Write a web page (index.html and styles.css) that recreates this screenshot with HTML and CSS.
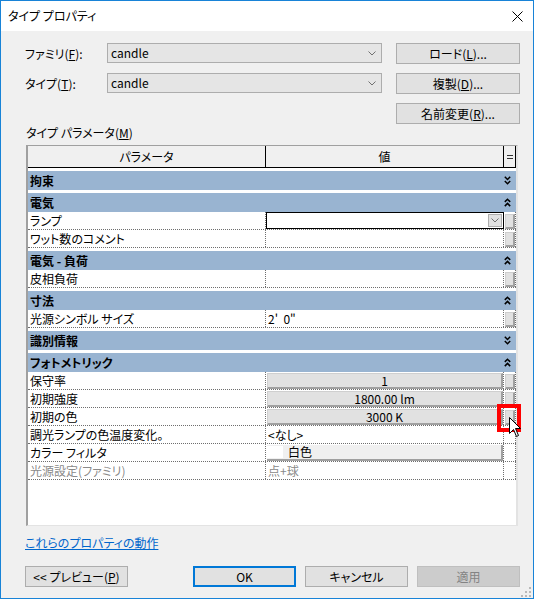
FILE: index.html
```html
<!DOCTYPE html>
<html lang="ja">
<head>
<meta charset="utf-8">
<title>タイプ プロパティ</title>
<link rel="stylesheet" href="styles.css">
</head>
<body>
<div class="window">
  <div class="titlebar">
    <span class="title">タイプ プロパティ</span>
    <svg class="close" width="11" height="11" viewBox="0 0 11 11"><path d="M0.5 0.5L10.5 10.5M10.5 0.5L0.5 10.5" stroke="#000" stroke-width="1" fill="none"/></svg>
  </div>
  <div class="main">
    <div class="form">
      <div class="lbl">ファミリ(<u>F</u>):</div>
      <div class="combo"><span>candle</span><svg width="8" height="5" viewBox="0 0 8 5"><polyline points="0.5,0.5 4,4 7.5,0.5" fill="none" stroke="#707070" stroke-width="1"/></svg></div>
      <div class="btn">ロード(<u>L</u>)...</div>
      <div class="lbl">タイプ(<u>T</u>):</div>
      <div class="combo"><span>candle</span><svg width="8" height="5" viewBox="0 0 8 5"><polyline points="0.5,0.5 4,4 7.5,0.5" fill="none" stroke="#707070" stroke-width="1"/></svg></div>
      <div class="btn">複製(<u>D</u>)...</div>
      <div></div>
      <div></div>
      <div class="btn">名前変更(<u>R</u>)...</div>
    </div>
    <div class="plabel">タイプ パラメータ(<u>M</u>)</div>
    <div class="grid">
      <div class="hdr">
        <div class="c1">パラメータ</div>
        <div class="c2">値</div>
        <div class="c3"><svg width="7" height="6" viewBox="0 0 7 6"><path d="M0 1.5H6M0 4.5H6" stroke="#333" stroke-width="1"/></svg></div>
      </div>
      <div class="grp"><span>拘束</span><svg class="chev" width="7" height="9" viewBox="0 0 7 9"><polyline points="0.8,0.8 3.5,3.5 6.2,0.8" /><polyline points="0.8,5 3.5,7.7 6.2,5" /></svg></div>
      <div class="grp"><span>電気</span><svg class="chev" width="7" height="9" viewBox="0 0 7 9"><polyline points="0.8,3.9 3.5,1.2 6.2,3.9" /><polyline points="0.8,8.1 3.5,5.4 6.2,8.1" /></svg></div>
      <div class="row">
        <div class="n">ランプ</div>
        <div class="v lampcell"><div class="lampbox"><div class="dd"><svg width="8" height="5" viewBox="0 0 8 5"><polyline points="0.5,0.5 4,4 7.5,0.5" fill="none" stroke="#707070" stroke-width="1"/></svg></div></div></div>
        <div class="e"><div class="eb"></div></div>
      </div>
      <div class="row">
        <div class="n">ワット数のコメント</div>
        <div class="v"></div>
        <div class="e"><div class="eb"></div></div>
      </div>
      <div class="grp"><span>電気 - 負荷</span><svg class="chev" width="7" height="9" viewBox="0 0 7 9"><polyline points="0.8,3.9 3.5,1.2 6.2,3.9" /><polyline points="0.8,8.1 3.5,5.4 6.2,8.1" /></svg></div>
      <div class="row">
        <div class="n">皮相負荷</div>
        <div class="v"></div>
        <div class="e"><div class="eb"></div></div>
      </div>
      <div class="grp"><span>寸法</span><svg class="chev" width="7" height="9" viewBox="0 0 7 9"><polyline points="0.8,3.9 3.5,1.2 6.2,3.9" /><polyline points="0.8,8.1 3.5,5.4 6.2,8.1" /></svg></div>
      <div class="row">
        <div class="n">光源シンボル サイズ</div>
        <div class="v">2'&nbsp; 0"</div>
        <div class="e"><div class="eb"></div></div>
      </div>
      <div class="grp"><span>識別情報</span><svg class="chev" width="7" height="9" viewBox="0 0 7 9"><polyline points="0.8,0.8 3.5,3.5 6.2,0.8" /><polyline points="0.8,5 3.5,7.7 6.2,5" /></svg></div>
      <div class="grp"><span>フォトメトリック</span><svg class="chev" width="7" height="9" viewBox="0 0 7 9"><polyline points="0.8,3.9 3.5,1.2 6.2,3.9" /><polyline points="0.8,8.1 3.5,5.4 6.2,8.1" /></svg></div>
      <div class="row">
        <div class="n">保守率</div>
        <div class="v btncell"><div class="vb">1</div></div>
        <div class="e"><div class="eb"></div></div>
      </div>
      <div class="row">
        <div class="n">初期強度</div>
        <div class="v btncell"><div class="vb">1800.00 lm</div></div>
        <div class="e"><div class="eb"></div></div>
      </div>
      <div class="row">
        <div class="n">初期の色</div>
        <div class="v btncell"><div class="vb">3000 K</div></div>
        <div class="e"><div class="eb"></div></div>
      </div>
      <div class="row">
        <div class="n">調光ランプの色温度変化。</div>
        <div class="v">&lt;なし&gt;</div>
        <div class="e"></div>
      </div>
      <div class="row">
        <div class="n">カラー フィルタ</div>
        <div class="v btncell"><div class="cb"><span class="swatch"></span><span>白色</span></div></div>
        <div class="e"></div>
      </div>
      <div class="row dim">
        <div class="n">光源設定(ファミリ)</div>
        <div class="v">点+球</div>
        <div class="e"></div>
      </div>
    </div>
    <a class="link" href="#">これらのプロパティの動作</a>
    <div class="footer">
      <div class="fbtn">&lt;&lt; プレビュー(<u>P</u>)</div>
      <div class="fbtn ok">OK</div>
      <div class="fbtn">キャンセル</div>
      <div class="fbtn disabled">適用</div>
    </div>
  </div>
  <svg class="grip" width="10" height="10" viewBox="0 0 10 10">
    <rect x="8" y="0" width="2" height="2" fill="#b8b8b8"/>
    <rect x="4" y="4" width="2" height="2" fill="#b8b8b8"/>
    <rect x="8" y="4" width="2" height="2" fill="#b8b8b8"/>
    <rect x="0" y="8" width="2" height="2" fill="#b8b8b8"/>
    <rect x="4" y="8" width="2" height="2" fill="#b8b8b8"/>
    <rect x="8" y="8" width="2" height="2" fill="#b8b8b8"/>
  </svg>
  <div class="redbox"></div>
  <svg class="cursor" width="13" height="21" viewBox="0 0 13 21"><path d="M0.5 0.5L0.5 16.5L4.5 12.5L7.5 19.5L9.5 18.5L6.5 11.5L11.5 11.5Z" fill="#fff" stroke="#000" stroke-width="1" stroke-linejoin="miter"/></svg>
</div>
</body>
</html>
```

FILE: styles.css
```css
html, body {
  margin: 0;
  padding: 0;
}
body {
  width: 534px;
  height: 599px;
  font-family: "Noto Sans CJK JP", "Noto Sans", sans-serif;
  font-size: 12px;
  font-feature-settings: "palt";
  color: #000;
  background: #f0f0f0;
}
u {
  text-decoration: underline;
  text-underline-offset: 1px;
}
.window {
  position: relative;
  width: 534px;
  height: 599px;
  box-sizing: border-box;
  border: 1px solid #1883d7;
  background: #f0f0f0;
  display: flex;
  flex-direction: column;
  overflow: hidden;
}
.titlebar {
  flex: none;
  height: 30px;
  background: #fff;
  display: flex;
  align-items: center;
  justify-content: space-between;
  padding: 0 10px 0 7px;
}
.title {
  line-height: 16px;
}
.close {
  display: block;
}
.main {
  display: flex;
  flex-direction: column;
  padding: 12px 13px 0 24px;
}
.form {
  display: grid;
  grid-template-columns: 68px 275px 124px;
  grid-auto-rows: 21px;
  column-gap: 14px;
  row-gap: 9px;
}
.lbl {
  display: flex;
  align-items: center;
  line-height: 16px;
  white-space: nowrap;
}
.combo {
  height: 20px;
  box-sizing: border-box;
  border: 1px solid #adadad;
  background: #e5e5e5;
  display: flex;
  align-items: center;
  justify-content: space-between;
  padding: 0 5px 0 3px;
  line-height: 16px;
}
.combo svg {
  display: block;
}
.btn {
  height: 21px;
  box-sizing: border-box;
  border: 1px solid #adadad;
  background: #e1e1e1;
  display: flex;
  align-items: center;
  justify-content: center;
  line-height: 16px;
}
.plabel {
  margin: 1px 0 0 1px;
  line-height: 16px;
}
.grid {
  margin: 4px 0 0 1px;
  width: 492px;
  height: 381px;
  box-sizing: border-box;
  border-top: 1px solid #a0a0a0;
  border-left: 2px solid #a0a0a0;
  border-right: 2px solid #e3e3e3;
  border-bottom: 1px solid #e3e3e3;
  background: #fff;
}
.hdr {
  display: flex;
  height: 22px;
  box-sizing: border-box;
  border-bottom: 1px solid #000;
  background: #f0f0f0;
}
.hdr > div {
  display: flex;
  align-items: center;
  justify-content: center;
  box-sizing: border-box;
  border-right: 1px solid #000;
  line-height: 16px;
}
.c1, .c2 {
  width: 238px;
}
.c3 {
  width: 12px;
}
.c3 svg {
  display: block;
  margin-left: 1px;
}
.grp {
  margin-top: 3px;
  height: 19px;
  background: #99b4d1;
  display: flex;
  align-items: center;
  justify-content: space-between;
  padding: 0 5px 0 2px;
  font-weight: bold;
  line-height: 16px;
}
.chev {
  display: block;
}
.chev polyline {
  fill: none;
  stroke: #000;
  stroke-width: 1.5;
}
.row {
  display: flex;
  height: 18px;
  box-sizing: border-box;
  border-bottom: 1px dotted #6e6e6e;
}
.row > div {
  box-sizing: border-box;
  height: 17px;
  line-height: 17px;
  white-space: nowrap;
  overflow: hidden;
}
.n {
  width: 238px;
  border-right: 1px dotted #6e6e6e;
  padding-left: 2px;
}
.v {
  width: 238px;
  border-right: 1px dotted #6e6e6e;
  padding-left: 2px;
}
.e {
  width: 12px;
  border-right: 1px dotted #6e6e6e;
}
.dim {
  color: #8a8a8a;
}
.lampcell {
  padding-left: 0;
  border-right: none;
  overflow: visible;
}
.lampbox {
  width: 238px;
  height: 17px;
  box-sizing: border-box;
  border: 1px solid #000;
  background: #fff;
  display: flex;
  justify-content: flex-end;
  align-items: center;
  padding-right: 1px;
}
.dd {
  width: 14px;
  height: 13px;
  box-sizing: border-box;
  background: #e1e1e1;
  border: 1px solid #adadad;
  display: flex;
  align-items: center;
  justify-content: center;
}
.dd svg {
  display: block;
}
.eb {
  width: 10px;
  height: 15px;
  margin: 2px 0 0 1px;
  box-sizing: border-box;
  background: #e1e1e1;
  border: 1px solid #cfcfcf;
  border-right: 2px solid #a0a0a0;
  border-bottom: 2px solid #a0a0a0;
}
.btncell {
  padding-left: 0;
}
.vb, .cb {
  width: 236px;
  height: 16px;
  margin: 1px 0 0 1px;
  box-sizing: border-box;
  border: 1px solid #cfcfcf;
  border-right: 2px solid #a0a0a0;
  border-bottom: 2px solid #a0a0a0;
  background: #e1e1e1;
  text-align: center;
  line-height: 13px;
}
.cb {
  background: #f0f0f0;
  display: flex;
  align-items: center;
  text-align: left;
  border: none;
  border-right: 2px solid #a0a0a0;
  border-bottom: 2px solid #a0a0a0;
  line-height: 14px;
}
.swatch {
  display: block;
  width: 16px;
  height: 12px;
  background: #fff;
  margin-right: 5px;
}
.link {
  align-self: flex-start;
  margin-top: 9px;
  line-height: 16px;
  color: #0066cc;
  text-decoration: underline;
}
.footer {
  display: flex;
  gap: 9px;
  margin-top: 15px;
}
.fbtn {
  width: 103px;
  height: 21px;
  box-sizing: border-box;
  border: 1px solid #adadad;
  background: #e1e1e1;
  display: flex;
  align-items: center;
  justify-content: center;
  line-height: 16px;
}
.fbtn.ok {
  margin-left: auto;
  border: 2px solid #0078d7;
}
.fbtn.disabled {
  background: #cccccc;
  border-color: #bfbfbf;
  color: #838383;
}
.grip {
  position: absolute;
  right: 2px;
  bottom: 1px;
}
.redbox {
  position: absolute;
  left: 496px;
  top: 403px;
  width: 24px;
  height: 28px;
  box-sizing: border-box;
  border: 4px solid #f00;
}
.cursor {
  position: absolute;
  left: 508px;
  top: 416px;
}
```
